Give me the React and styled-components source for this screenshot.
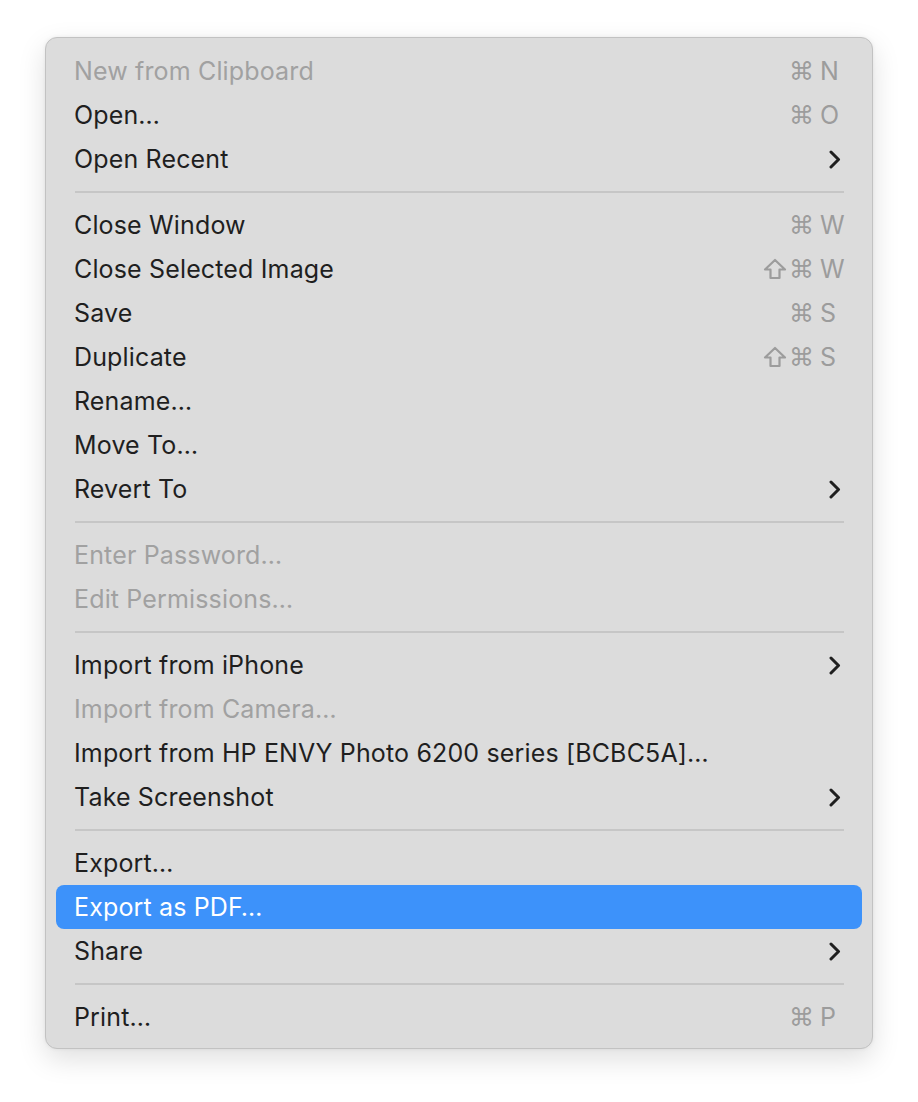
import styled, { createGlobalStyle } from 'styled-components'

const GlobalStyle = createGlobalStyle`
  html, body {
    margin: 0;
    padding: 0;
    background: #ffffff;
  }
  body {
    font-family: Inter, 'Noto Sans', 'Liberation Sans', sans-serif;
    -webkit-font-smoothing: antialiased;
  }
`

const groups = [
  [
    { label: 'New from Clipboard', keys: '⌘N', disabled: true },
    { label: 'Open…', keys: '⌘O' },
    { label: 'Open Recent', sub: true }
  ],
  [
    { label: 'Close Window', keys: '⌘W' },
    { label: 'Close Selected Image', keys: '⌘W', shift: true },
    { label: 'Save', keys: '⌘S' },
    { label: 'Duplicate', keys: '⌘S', shift: true },
    { label: 'Rename…' },
    { label: 'Move To…' },
    { label: 'Revert To', sub: true }
  ],
  [
    { label: 'Enter Password…', disabled: true },
    { label: 'Edit Permissions…', disabled: true }
  ],
  [
    { label: 'Import from iPhone', sub: true },
    { label: 'Import from Camera…', disabled: true },
    { label: 'Import from HP ENVY Photo 6200 series [BCBC5A]…' },
    { label: 'Take Screenshot', sub: true }
  ],
  [
    { label: 'Export…' },
    { label: 'Export as PDF…', active: true },
    { label: 'Share', sub: true }
  ],
  [{ label: 'Print…', keys: '⌘P' }]
]

function Chevron() {
  return (
    <svg width="12" height="19" viewBox="0 0 12 19">
      <path
        d="M2 2 L9.5 9.5 L2 17"
        fill="none"
        stroke="#1f1f1f"
        strokeWidth="3"
        strokeLinecap="round"
        strokeLinejoin="round"
      />
    </svg>
  )
}

function ShiftIcon() {
  return (
    <svg width="24" height="22" viewBox="0 0 24 22">
      <path
        d="M12 2 L22 11.5 L16.5 11.5 L16.5 20 L7.5 20 L7.5 11.5 L2 11.5 Z"
        fill="none"
        stroke="#9c9c9c"
        strokeWidth="2.2"
        strokeLinejoin="round"
      />
    </svg>
  )
}

export default function App() {
  return (
    <>
      <GlobalStyle />
      <Page>
        <Menu>
          {groups.map((group, gi) => (
            <Group key={gi}>
              {gi > 0 && <Separator />}
              {group.map(item => (
                <Row key={item.label} $active={item.active}>
                  <Label $disabled={item.disabled} $active={item.active}>
                    {item.label}
                  </Label>
                  {item.keys && (
                    <Shortcut>
                      {item.shift && <ShiftIcon />}
                      <Cmd>{item.keys[0]}</Cmd>
                      <KeyLetter>{item.keys.slice(1)}</KeyLetter>
                    </Shortcut>
                  )}
                  {item.sub && (
                    <Arrow>
                      <Chevron />
                    </Arrow>
                  )}
                </Row>
              ))}
            </Group>
          ))}
        </Menu>
      </Page>
    </>
  )
}

const Page = styled.div`
  width: 918px;
  height: 1102px;
  box-sizing: border-box;
  padding: 37px 0 0 45px;
  background: #ffffff;
`

const Menu = styled.div`
  width: 828px;
  box-sizing: border-box;
  padding: 11px 10px 9px;
  background: #dcdcdc;
  border: 1px solid #c2c2c2;
  border-radius: 12px;
  box-shadow: 0 10px 28px rgba(0, 0, 0, 0.13), 0 0 4px rgba(0, 0, 0, 0.06);
`

const Group = styled.div`
  display: flex;
  flex-direction: column;
`

const Separator = styled.div`
  height: 2px;
  margin: 10px 18px 10px 19px;
  background: #c6c6c6;
`

const Row = styled.div`
  display: flex;
  align-items: center;
  height: 44px;
  padding: 0 19px 0 18px;
  border-radius: 8px;
  background: ${p => (p.$active ? '#3d92fa' : 'transparent')};
`

const Label = styled.span`
  flex: 1;
  font-size: 25px;
  letter-spacing: 0.15px;
  white-space: nowrap;
  color: ${p => (p.$active ? '#ffffff' : p.$disabled ? '#a1a1a1' : '#1f1f1f')};
`

const Shortcut = styled.span`
  display: flex;
  align-items: center;
  gap: 2px;
  color: #9c9c9c;
  font-size: 25px;
`

const Cmd = styled.span`
  font-family: 'DejaVu Sans', sans-serif;
  font-size: 25px;
`

const KeyLetter = styled.span`
  width: 23px;
  margin-left: 4px;
  text-align: left;
`

const Arrow = styled.span`
  display: flex;
  align-items: center;
  padding-right: 2px;
`
